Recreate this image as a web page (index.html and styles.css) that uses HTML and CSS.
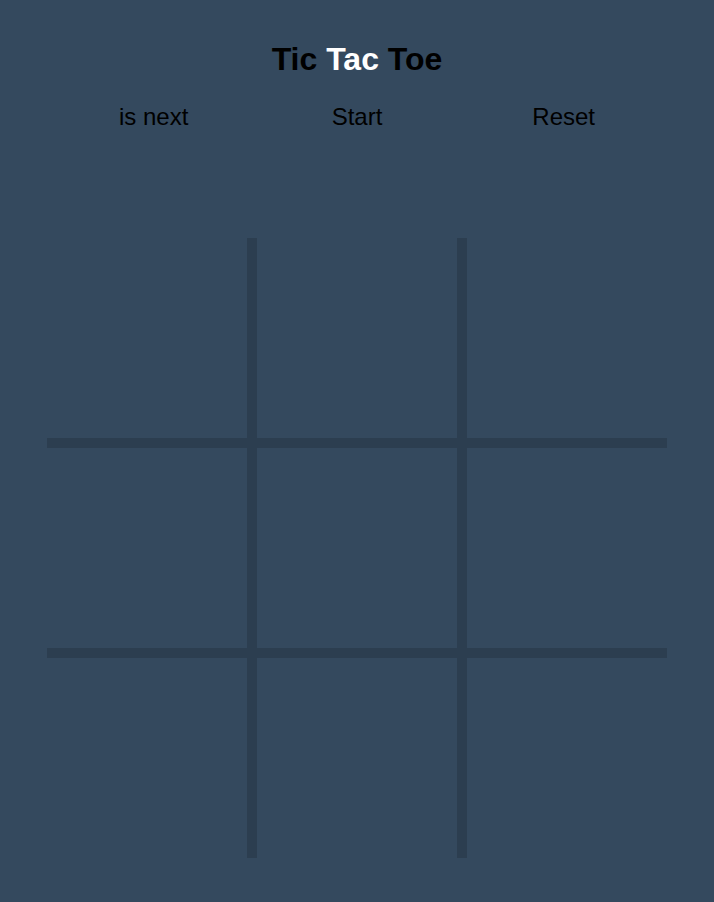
FILE: index.html
```html
<!DOCTYPE html>
<html lang="en">
<head>
<meta charset="utf-8">
<title>Tic Tac Toe</title>
<link rel="stylesheet" href="styles.css">
</head>
<body>
<main class="game">
  <h1 class="title">Tic <span class="accent">Tac</span> Toe</h1>
  <div class="controls">
    <div class="status"><span class="player"></span> is next</div>
    <div class="control">Start</div>
    <div class="control">Reset</div>
  </div>
  <div class="board">
    <div class="cell"></div>
    <div class="cell"></div>
    <div class="cell"></div>
    <div class="cell"></div>
    <div class="cell"></div>
    <div class="cell"></div>
    <div class="cell"></div>
    <div class="cell"></div>
    <div class="cell"></div>
  </div>
</main>
</body>
</html>
```

FILE: styles.css
```css
html, body {
  margin: 0;
  padding: 0;
  background: #34495e;
}

body {
  font-family: "Liberation Sans", Arial, Helvetica, sans-serif;
  color: #000;
  min-height: 902px;
}

.game {
  display: flex;
  flex-direction: column;
  align-items: center;
  padding-top: 41px;
}

.title {
  margin: 0;
  font-size: 32px;
  line-height: 37px;
  font-weight: bold;
  text-align: center;
}

.accent {
  color: #fff;
}

.controls {
  margin-top: 25px;
  width: 620px;
  display: grid;
  grid-template-columns: repeat(3, 1fr);
  font-size: 24px;
  line-height: 28px;
  text-align: center;
  white-space: pre;
}

.board {
  margin-top: 107px;
  width: 620px;
  display: grid;
  grid-template-columns: repeat(3, auto);
  justify-content: start;
}

.cell {
  width: 200px;
  height: 200px;
}

.cell:nth-child(3n+1),
.cell:nth-child(3n+2) {
  border-right: 10px solid #2c3e50;
}

.cell:nth-child(-n+6) {
  border-bottom: 10px solid #2c3e50;
}
```
